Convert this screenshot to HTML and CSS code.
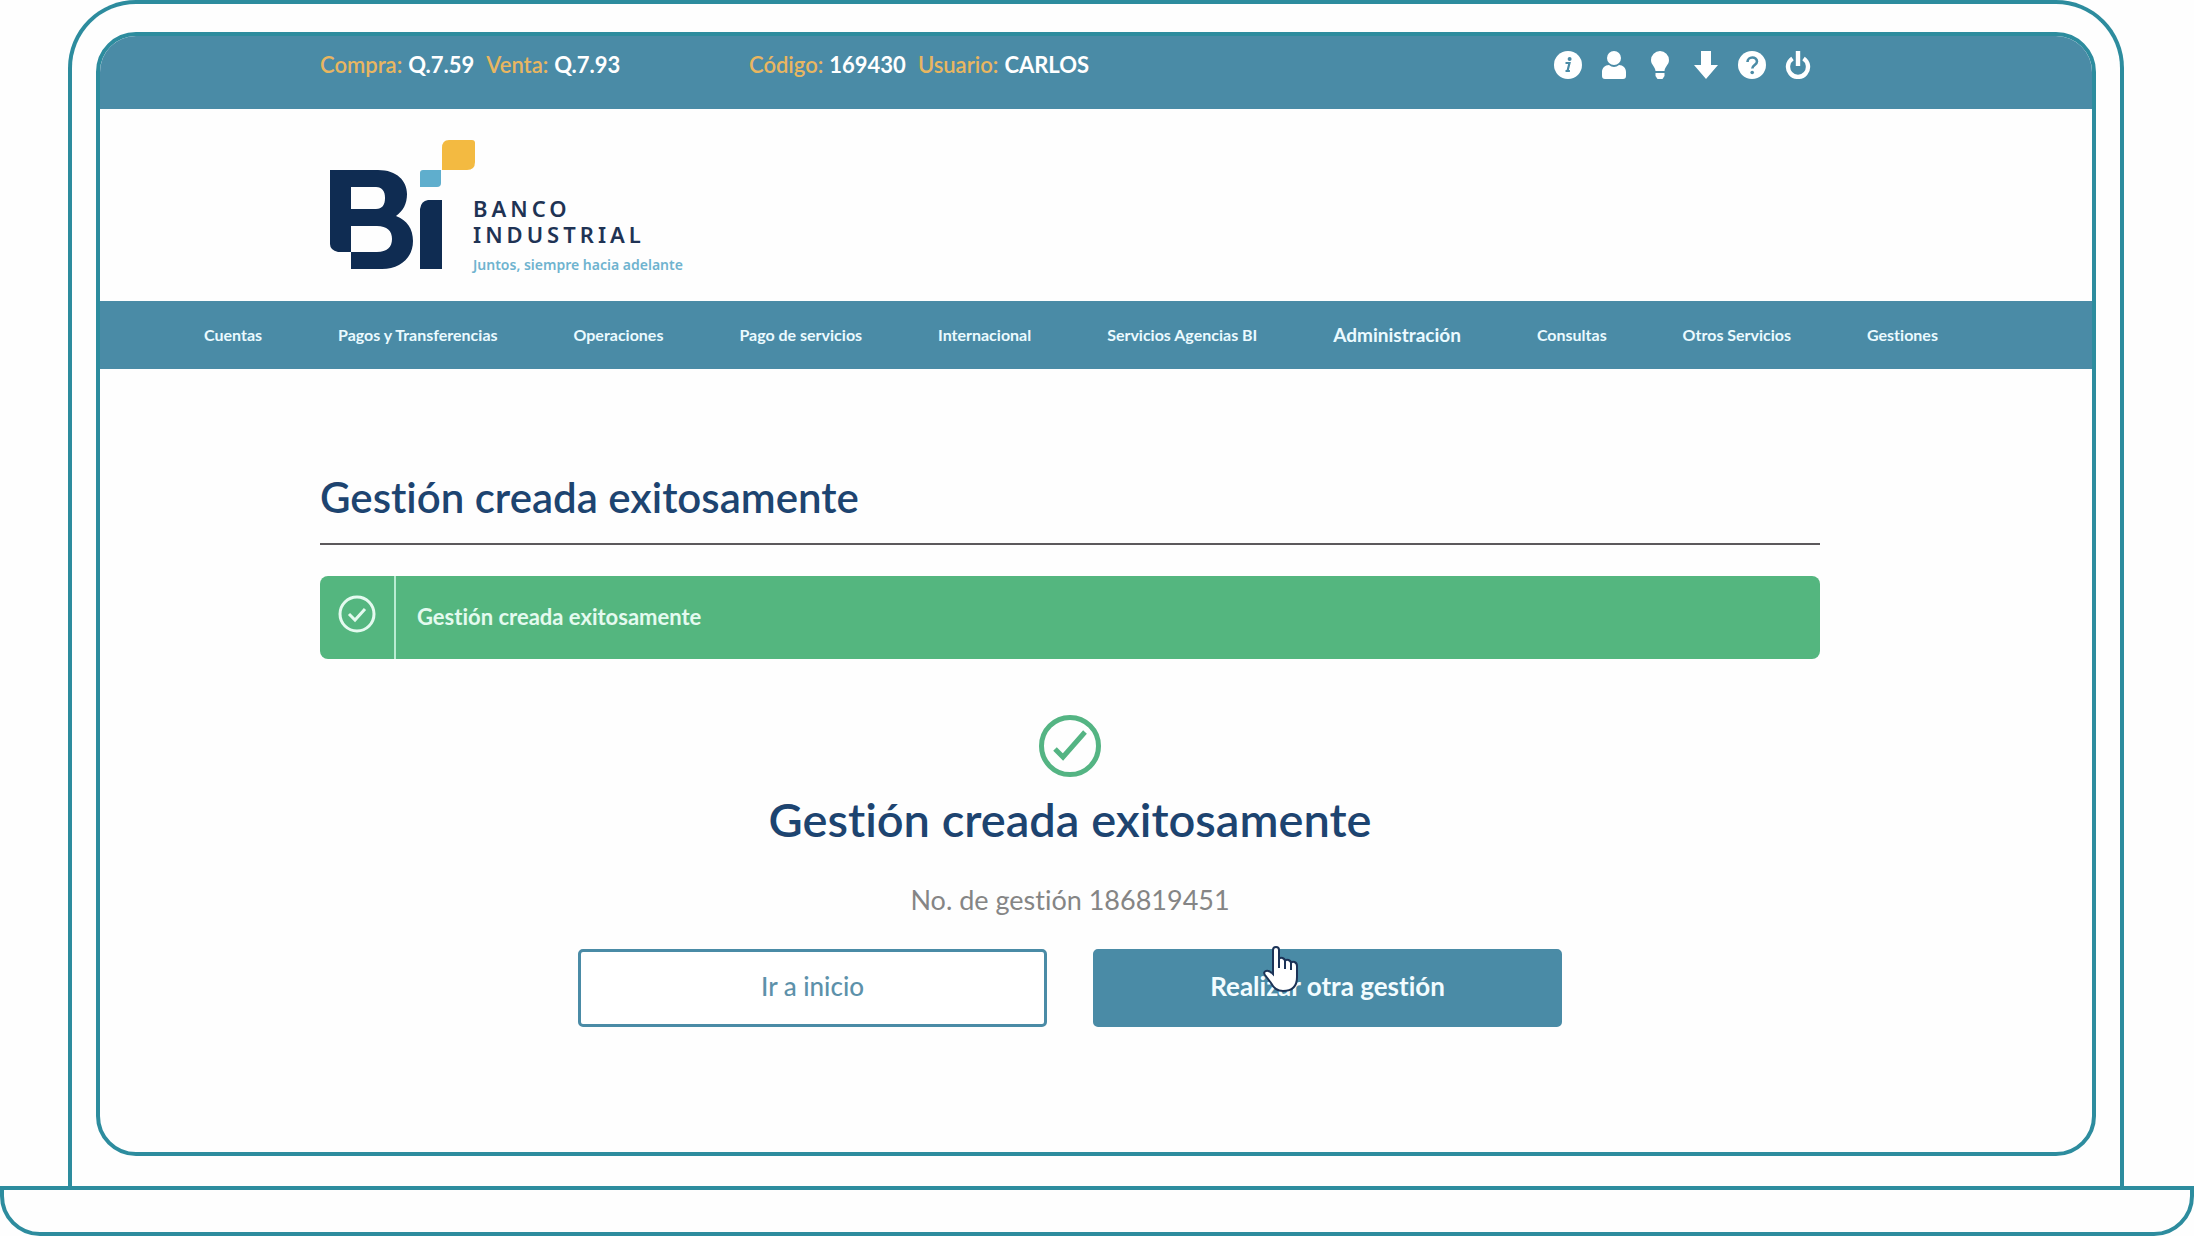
FILE: index.html
```html
<!DOCTYPE html>
<html lang="es">
<head>
<meta charset="utf-8">
<meta name="viewport" content="width=device-width, initial-scale=1">
<title>Banco Industrial</title>
<link rel="stylesheet" href="styles.css">
</head>
<body>
<div class="laptop-lid">
  <div class="screen">
    <header>
      <div class="topbar">
        <dl class="info rates">
          <div class="pair"><dt>Compra:</dt><dd>Q.7.59</dd></div>
          <div class="pair"><dt>Venta:</dt><dd>Q.7.93</dd></div>
        </dl>
        <dl class="info">
          <div class="pair"><dt>Código:</dt><dd>169430</dd></div>
          <div class="pair"><dt>Usuario:</dt><dd>CARLOS</dd></div>
        </dl>
        <div class="tools">
          <button type="button" class="tool" aria-label="Información">
            <svg viewBox="0 0 28 28"><circle cx="14" cy="14" r="14" fill="#fff"/><circle cx="15.6" cy="8" r="2" fill="#4a8ba6"/><path d="M11.500 12h4l-2 8h2.400M11.500 20h4" fill="none" stroke="#4a8ba6" stroke-width="2.200"/></svg>
          </button>
          <button type="button" class="tool" aria-label="Perfil">
            <svg viewBox="0 0 28 28" fill="#fff"><circle cx="14" cy="7" r="7"/><path d="M2 25v-4c0-4 3-7 7-7 3 2.500 7 2.500 10 0 4 0 7 3 7 7v4q0 3-3 3H5q-3 0-3-3z"/></svg>
          </button>
          <button type="button" class="tool" aria-label="Consejos">
            <svg viewBox="0 0 28 28" fill="#fff"><path d="M14 0a9 9 0 0 1 9 9c0 5-4 6-4.500 11h-9C9 15 5 14 5 9a9 9 0 0 1 9-9z"/><path d="M9.500 22h9v3l-2 3h-5l-2-3z"/></svg>
          </button>
          <button type="button" class="tool" aria-label="Descargar">
            <svg viewBox="0 0 28 28" fill="#fff"><path d="M9 0h10v14h7L14 28 2 14h7z"/></svg>
          </button>
          <button type="button" class="tool" aria-label="Ayuda">
            <svg viewBox="0 0 28 28"><circle cx="14" cy="14" r="14" fill="#fff"/><path d="M9.500 11c0-6 9.500-6 9.500-.500 0 3.500-4.700 3.500-4.700 7" fill="none" stroke="#4a8ba6" stroke-width="2.600"/><circle cx="14.200" cy="21.500" r="1.800" fill="#4a8ba6"/></svg>
          </button>
          <button type="button" class="tool" aria-label="Salir">
            <svg viewBox="0 0 28 28" fill="none" stroke="#fff"><path d="M8.500 7.500a10 10 0 1 0 11 0" stroke-width="4.400"/><path d="M14 0v15" stroke-width="4.400"/></svg>
          </button>
        </div>
      </div>
      <div class="brand">
        <a class="logo" href="#">
          <svg class="logo-mark" viewBox="0 0 146 130" aria-hidden="true">
            <path fill="#0f2c52" fill-rule="evenodd" d="M0 30H48C67 30 77 41 77 54C77 64 73 71 66 76C77 80 83 89 83 101C83 118 70 129 52 129H21V112H8Q0 110 0 104zM21 47V69H46C52 69 55 65 55 58C55 51 52 47 46 47zM21 86V112H47C57 112 62 107 62 99C62 91 57 86 47 86z"/>
            <path fill="#0f2c52" d="M90 129V69Q91 61 98 60H112V129z"/>
            <path fill="#5faecd" d="M90 33Q90 30 93 30H111V43Q111 47 107 47H90z"/>
            <path fill="#f3ba41" d="M112 30V8Q112 0 119 0H142Q145 0 145 3V22Q145 30 137 30z"/>
          </svg>
          <span class="logo-text">
            <span class="logo-name">BANCO<br>INDUSTRIAL</span>
            <span class="logo-slogan">Juntos, siempre hacia adelante</span>
          </span>
        </a>
      </div>
      <nav class="menu">
        <a href="#">Cuentas</a>
        <a href="#">Pagos y Transferencias</a>
        <a href="#">Operaciones</a>
        <a href="#">Pago de servicios</a>
        <a href="#">Internacional</a>
        <a href="#">Servicios Agencias BI</a>
        <a href="#" class="current">Administración</a>
        <a href="#">Consultas</a>
        <a href="#">Otros Servicios</a>
        <a href="#">Gestiones</a>
      </nav>
    </header>
    <main class="content">
      <h1>Gestión creada exitosamente</h1>
      <div class="alert" role="status">
        <span class="alert-icon">
          <svg viewBox="0 0 38 38" fill="none" stroke="#e4faef"><circle cx="19" cy="19" r="17" stroke-width="3"/><path d="M11 19l6 6 10-11" stroke-width="3"/></svg>
        </span>
        <p>Gestión creada exitosamente</p>
      </div>
      <section class="result">
        <svg class="result-icon" viewBox="0 0 62 62" fill="none" stroke="#54b483"><circle cx="31" cy="31" r="28.500" stroke-width="5"/><path d="M16 34l8 8 22-25" stroke-width="5"/></svg>
        <h2>Gestión creada exitosamente</h2>
        <p class="number">No. de gestión 186819451</p>
        <div class="actions">
          <button type="button" class="btn">Ir a inicio</button>
          <button type="button" class="btn primary">Realizar otra gestión
            <svg class="pointer" viewBox="0 0 36 46" aria-hidden="true"><path d="M10 26V4Q10 1 13 1T16 4V13Q17 11 19.500 12T22 15Q23 13 25.500 14T28 17Q29 15 31.500 16T34 20V31Q34 45 20 45Q12 45 8 37L2 29Q0 26 3 25T10 28z" fill="#fff" stroke="#1c3357" stroke-width="2"/><path d="M16 13v9M22 15v8M28 17v7" stroke="#1c3357" stroke-width="2"/></svg>
          </button>
        </div>
      </section>
    </main>
  </div>
</div>
<div class="laptop-base"></div>
</body>
</html>
```
FILE: styles.css
```css
* { box-sizing: border-box; }

body {
  margin: 0;
  min-height: 100vh;
  display: flex;
  flex-direction: column;
  background: #fefefe;
  font-family: Lato, "Liberation Sans", sans-serif;
  font-variant-ligatures: none;
}

h1, h2, p, dl, dd { margin: 0; }
svg { display: block; }
button { font: inherit; font-variant-ligatures: none; cursor: pointer; }

/* Laptop frame */
.laptop-lid {
  flex: 1;
  display: flex;
  margin: 0 70px 0 68px;
  padding: 28px 24px 30px;
  border: 4px solid #2d8c9e;
  border-bottom: 0;
  border-radius: 68px 68px 0 0;
}
.screen {
  flex: 1;
  min-width: 0;
  border: 4px solid #2d8c9e;
  border-radius: 40px;
  overflow: hidden;
}
.laptop-base {
  height: 50px;
  border: 4px solid #2d8c9e;
  border-radius: 0 0 40px 40px;
}

/* Header */
.topbar {
  display: flex;
  align-items: center;
  padding: 13px 280px 29px 220px;
  background: #4a8ba6;
  font-size: 22px;
  line-height: 31px;
}
.info { display: flex; gap: 12px; }
.rates { width: 429px; }
.pair { display: flex; gap: 6px; }
dt { color: #e9b660; font-weight: 600; }
dd { color: #fff; font-weight: 700; }
.tools { display: flex; gap: 18px; margin-left: auto; }
.tool {
  width: 28px;
  height: 28px;
  padding: 0;
  border: 0;
  background: none;
}
.tool svg { width: 28px; height: 28px; }

.brand { padding: 31px 220px 23px 230px; }
.logo {
  display: inline-flex;
  align-items: flex-start;
  text-decoration: none;
  vertical-align: top;
}
.logo-mark { width: 146px; height: 130px; }
.logo-text {
  display: grid;
  gap: 5px;
  margin-left: -3px;
  padding-top: 55px;
  color: #1f3354;
}
.logo-name {
  font: 600 22px/26px "Noto Sans", sans-serif;
  letter-spacing: 4px;
}
.logo-slogan {
  color: #6fb3cf;
  font: 600 14px/26px "Noto Sans", sans-serif;
}

.menu {
  display: flex;
  justify-content: space-between;
  align-items: center;
  padding: 0 154px 0 104px;
  background: #4a8ba6;
  line-height: 68px;
  font-size: 16px;
  font-weight: 700;
}
.menu a { color: #eafaff; text-decoration: none; white-space: nowrap; }
.menu .current { font-size: 19px; }

/* Content */
.content { padding: 95px 272px 80px 220px; }
h1 {
  padding-bottom: 13px;
  border-bottom: 2px solid #5c595c;
  color: #1d4470;
  font-size: 42px;
  line-height: 66px;
  font-weight: 600;
}
.alert {
  display: flex;
  align-items: stretch;
  height: 83px;
  margin-top: 31px;
  border-radius: 8px;
  background: #54b67f;
  color: #e4faef;
  font-size: 22px;
  line-height: 82px;
  font-weight: 700;
}
.alert-icon {
  display: flex;
  width: 76px;
  padding: 19px 18px;
  border-right: 2px solid #b9ecd2;
}
.alert-icon svg { width: 38px; height: 38px; }
.alert p { padding-left: 21px; }

.result {
  display: flex;
  flex-direction: column;
  align-items: center;
  padding-top: 56px;
}
.result-icon { width: 62px; height: 62px; }
h2 {
  margin-top: 10px;
  color: #1d4470;
  font-size: 47px;
  line-height: 64px;
  font-weight: 600;
}
.number {
  margin-top: 32px;
  color: #858585;
  font-size: 27px;
  line-height: 34px;
}
.actions {
  display: grid;
  grid-template-columns: 1fr 1fr;
  gap: 46px;
  width: 984px;
  max-width: 100%;
  margin-top: 32px;
}
.btn {
  position: relative;
  height: 78px;
  padding: 0 0 4px;
  border: 3px solid #4a8ba6;
  border-radius: 5px;
  background: #fff;
  color: #5d91aa;
  font-size: 26px;
  font-weight: 500;
}
.btn.primary {
  background: #4a8ba6;
  color: #f2fcff;
  font-weight: 700;
}
.pointer {
  position: absolute;
  left: 36%;
  top: -6px;
  width: 36px;
  height: 46px;
}
```
